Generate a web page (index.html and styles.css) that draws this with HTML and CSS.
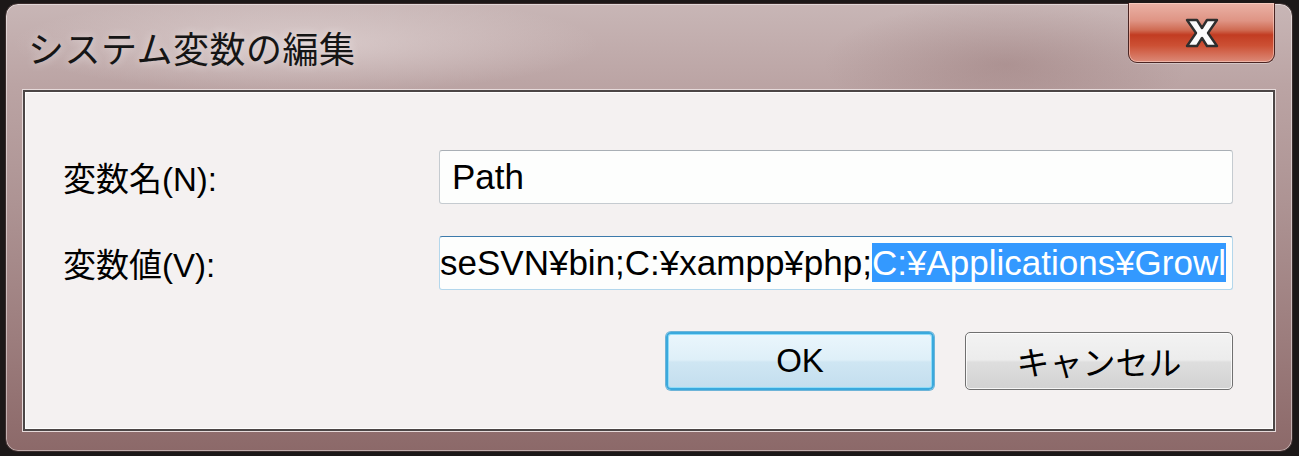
FILE: index.html
```html
<!DOCTYPE html>
<html lang="ja">
<head>
<meta charset="utf-8">
<title>システム変数の編集</title>
<link rel="stylesheet" href="styles.css">
</head>
<body>
<div class="window">
  <div class="titlebar">
    <div class="title">システム変数の編集</div>
    <div class="close">
      <svg width="34" height="30" viewBox="0 0 34 30">
        <path d="M2 2 H12 L17 10 L22 2 H32 L23 15 L32 28 H22 L17 20 L12 28 H2 L11 15 Z" fill="#fbfbfb" stroke="#2e2e2e" stroke-width="2.4" stroke-linejoin="round"/>
      </svg>
    </div>
  </div>
  <div class="client">
    <div class="form">
      <div class="label">変数名(N):</div>
      <div class="field"><span class="txt">Path</span></div>
      <div class="label">変数値(V):</div>
      <div class="field focused"><span class="txt scroll">seSVN¥bin;C:¥xampp¥php;<span class="sel">C:¥Applications¥Growl</span></span></div>
    </div>
    <div class="buttons">
      <div class="btn default">OK</div>
      <div class="btn">キャンセル</div>
    </div>
  </div>
</div>
</body>
</html>
```

FILE: styles.css
```css
* { box-sizing: border-box; }
html, body { margin: 0; height: 456px; }
body {
  background: #1c1818;
  padding: 3px 6px 4px 5px;
  font-family: "Liberation Sans", "Noto Sans CJK JP", sans-serif;
  overflow: hidden;
}
.window {
  height: 449px;
  display: flex;
  flex-direction: column;
  padding: 0 17px 20px 17px;
  border-radius: 13px;
  border: 1px solid #3a2c2c;
  box-shadow: inset 0 0 0 1px rgba(255,255,255,0.45);
  background:
    radial-gradient(ellipse 420px 70px at 300px 40px, rgba(235,225,225,0.55), rgba(235,225,225,0) 70%),
    radial-gradient(ellipse 260px 90px at 1000px 60px, rgba(120,80,80,0.25), rgba(120,80,80,0) 70%),
    linear-gradient(180deg, #c8b6b6 0%, #bba4a4 18%, #ad9393 45%, #9c7d7d 75%, #8c6969 100%);
}
.titlebar {
  height: 86px;
  display: flex;
  align-items: center;
  justify-content: space-between;
}
.title {
  font-family: "Noto Sans CJK JP", sans-serif;
  font-size: 36px;
  color: #151515;
  padding-left: 5px;
  letter-spacing: 0.5px;
  text-shadow: 0 0 10px rgba(255,255,255,0.55);
}
.close {
  align-self: flex-start;
  margin-top: -1px;
  width: 147px;
  height: 60px;
  display: flex;
  align-items: center;
  justify-content: center;
  border: 1px solid #4a2422;
  border-top: none;
  border-radius: 0 0 9px 9px;
  box-shadow: inset 0 0 0 1px rgba(255,220,210,0.55), 0 1px 0 rgba(255,255,255,0.35);
  background: linear-gradient(180deg, #eab2a6 0%, #df9484 30%, #cf6a52 46%, #c23c22 54%, #cc5034 72%, #dc8a78 100%);
}
.client {
  flex: 1;
  display: flex;
  flex-direction: column;
  border: 2px solid #4c4646;
  background: #f4f1f1;
  box-shadow: 0 0 0 1px #e6dada, inset 0 0 0 1px #ffffff;
  padding: 58px 40px 0 38px;
}
.form {
  display: grid;
  grid-template-columns: 376px 1fr;
  grid-auto-rows: 54px;
  row-gap: 32px;
  align-items: center;
}
.label {
  font-size: 33px;
  color: #000;
}
.field {
  height: 54px;
  display: flex;
  align-items: center;
  background: #fdfefd;
  border: 1px solid #c5cbd0;
  border-top-color: #a9afb5;
  border-radius: 3px;
  padding: 0 10px 0 12px;
  overflow: hidden;
  white-space: nowrap;
}
.field.focused {
  border-color: #b3d7ec;
  border-top-color: #3c7aab;
  justify-content: flex-end;
  padding-right: 6px;
}
.txt {
  font-size: 35px;
  color: #000;
  line-height: 42px;
}
.sel {
  background: #3399ff;
  color: #fff;
}
.buttons {
  display: flex;
  justify-content: flex-end;
  gap: 31px;
  margin-top: 42px;
}
.btn {
  width: 268px;
  height: 58px;
  display: flex;
  align-items: center;
  justify-content: center;
  font-size: 33px;
  color: #000;
  border: 1px solid #707070;
  border-radius: 5px;
  box-shadow: inset 0 0 0 1px rgba(255,255,255,0.8);
  background: linear-gradient(180deg, #f3f3f3 0%, #ececec 48%, #dedede 52%, #d2d2d2 100%);
}
.btn.default {
  border: 2px solid #3aa9dd;
  box-shadow: inset 0 0 0 1px #8fdcf8, 0 0 0 1px #6db4d8;
  background: linear-gradient(180deg, #eaf6fc 0%, #deeff8 48%, #cfe6f3 52%, #c3deee 100%);
}
```
